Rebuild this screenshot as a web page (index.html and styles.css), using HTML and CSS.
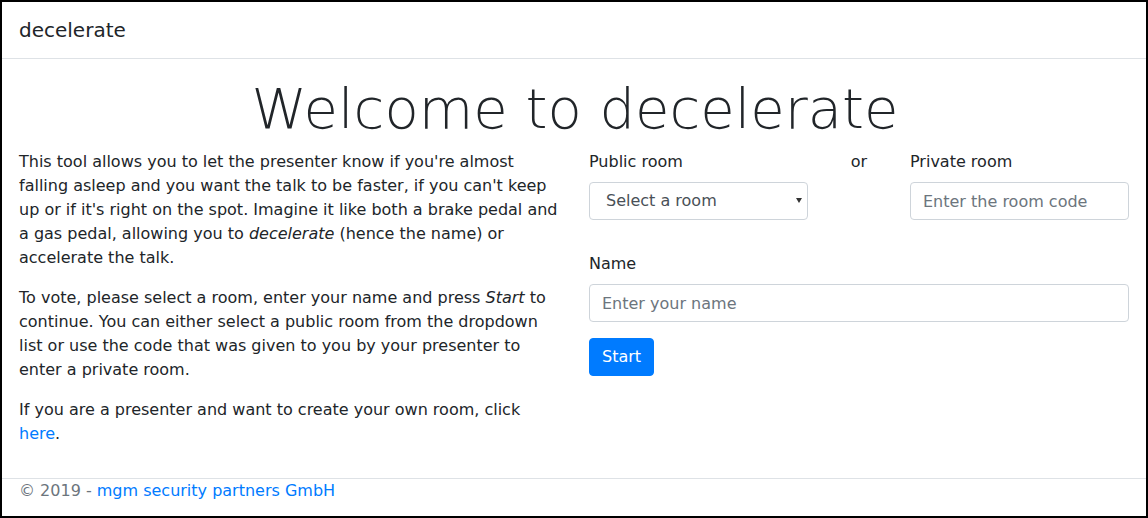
FILE: index.html
```html
<!DOCTYPE html>
<html>
<head>
<meta charset="utf-8">
<link rel="stylesheet" href="styles.css">
</head>
<body>
<div class="frame">
  <header class="navbar">
    <span class="brand">decelerate</span>
  </header>
  <main class="main">
    <h1 class="title">Welcome to decelerate</h1>
    <div class="row">
      <div class="col">
        <p>This tool allows you to let the presenter know if you're almost falling asleep and you want the talk to be faster, if you can't keep up or if it's right on the spot. Imagine it like both a brake pedal and a gas pedal, allowing you to <em>decelerate</em> (hence the name) or accelerate the talk.</p>
        <p>To vote, please select a room, enter your name and press <em>Start</em> to continue. You can either select a public room from the dropdown list or use the code that was given to you by your presenter to enter a private room.</p>
        <p>If you are a presenter and want to create your own room, click <a href="#">here</a>.</p>
      </div>
      <div class="col">
        <div class="room-row">
          <div class="field">
            <label class="label">Public room</label>
            <div class="select-wrap">
              <select class="control select"><option>Select a room</option></select>
              <span class="caret"></span>
            </div>
          </div>
          <div class="or">or</div>
          <div class="field">
            <label class="label">Private room</label>
            <input class="control" type="text" placeholder="Enter the room code">
          </div>
        </div>
        <div class="field name-field">
          <label class="label">Name</label>
          <input class="control" type="text" placeholder="Enter your name">
        </div>
        <button class="btn">Start</button>
      </div>
    </div>
  </main>
  <footer class="footer">
    <span class="muted">© 2019 - </span><a href="#">mgm security partners GmbH</a>
  </footer>
</div>
</body>
</html>
```
FILE: styles.css
```css
* { box-sizing: border-box; }
html, body { margin: 0; padding: 0; }
body {
  font-family: "DejaVu Sans", sans-serif;
  font-size: 16px;
  line-height: 1.5;
  color: #212529;
  background: #fff;
}
.frame {
  width: 1148px;
  height: 518px;
  border: 2px solid #000;
  display: flex;
  flex-direction: column;
  overflow: hidden;
}
.navbar {
  height: 57px;
  border-bottom: 1px solid #dee2e6;
  padding: 13px 17px;
  flex: none;
}
.brand {
  font-size: 20px;
  line-height: 30px;
  display: block;
}
.main {
  flex: 1;
  padding: 0 15px 0 17px;
}
.title {
  margin: 16px 0 8px;
  font-size: 56px;
  font-weight: 200;
  line-height: 1.2;
  text-align: center;
  color: #212529;
}
.row {
  display: grid;
  grid-template-columns: 540px 1fr;
  column-gap: 30px;
}
.col p { margin: 0 0 16px; }
a { color: #007bff; text-decoration: none; }
.room-row {
  display: grid;
  grid-template-columns: 1fr 102px 1fr;
  width: 540px;
  margin-bottom: 32px;
}
.or { text-align: center; }
.label {
  display: block;
  margin-bottom: 8px;
}
.control {
  display: block;
  width: 100%;
  height: 38px;
  padding: 6px 12px;
  font-family: "DejaVu Sans", sans-serif;
  font-size: 16px;
  line-height: 1.5;
  color: #495057;
  background: #fff;
  border: 1px solid #ced4da;
  border-radius: 4px;
  outline: none;
}
.control::placeholder { color: #6c757d; opacity: 1; }
.select-wrap { position: relative; }
.select {
  appearance: none;
  -webkit-appearance: none;
  padding-left: 16px;
}
.caret {
  position: absolute;
  right: 6px;
  top: 16px;
  width: 0;
  height: 0;
  border-left: 3px solid transparent;
  border-right: 3px solid transparent;
  border-top: 5px solid #333;
}
.name-field { width: 540px; margin-bottom: 16px; }
.btn {
  font-family: "DejaVu Sans", sans-serif;
  font-size: 16px;
  line-height: 1.5;
  padding: 6px 12px;
  height: 38px;
  color: #fff;
  background: #007bff;
  border: 1px solid #007bff;
  border-radius: 4px;
}
.footer {
  flex: none;
  height: 38px;
  border-top: 1px solid #dee2e6;
  padding: 0 17px;
  line-height: 24px;
}
.muted { color: #6c757d; }
```
